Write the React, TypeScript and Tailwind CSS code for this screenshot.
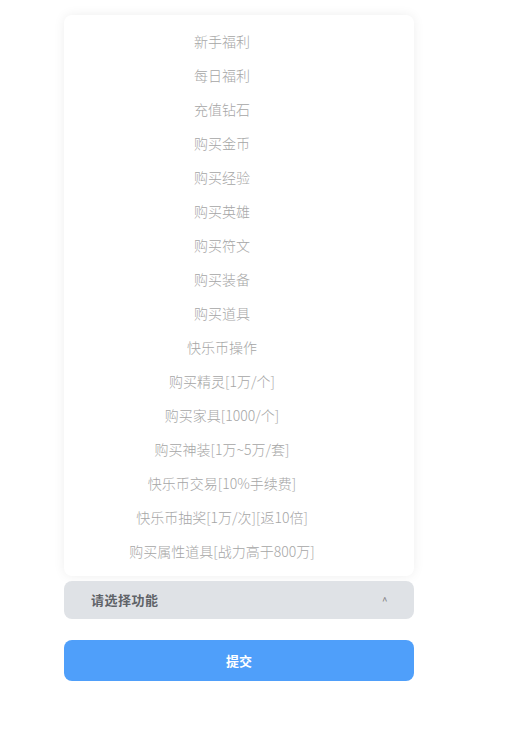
import { useState } from "react";

const options = [
  "新手福利",
  "每日福利",
  "充值钻石",
  "购买金币",
  "购买经验",
  "购买英雄",
  "购买符文",
  "购买装备",
  "购买道具",
  "快乐币操作",
  "购买精灵[1万/个]",
  "购买家具[1000/个]",
  "购买神装[1万~5万/套]",
  "快乐币交易[10%手续费]",
  "快乐币抽奖[1万/次][返10倍]",
  "购买属性道具[战力高于800万]",
];

export default function App() {
  const [open, setOpen] = useState(true);
  const [value, setValue] = useState<string | null>(null);

  return (
    <div
      className="min-h-[733px] w-full bg-white"
      style={{ fontFamily: '"Microsoft YaHei", "Noto Sans CJK SC", "Liberation Sans", sans-serif' }}
    >
      <div className="ml-[64px] w-[350px] pt-[15px]">
        {/* Dropdown panel */}
        {open && (
          <ul className="mb-[5px] rounded-lg bg-white pt-[9px] pb-[8px] shadow-[0_0_12px_rgba(0,0,0,0.07)]">
            {options.map((opt) => (
              <li
                key={opt}
                onClick={() => {
                  setValue(opt);
                  setOpen(false);
                }}
                className="flex h-[34px] cursor-pointer items-center justify-center pr-[34px] text-[14px] font-light text-[#a6a6a6]"
              >
                {opt}
              </li>
            ))}
          </ul>
        )}

        {/* Select */}
        <button
          onClick={() => setOpen(!open)}
          className="flex h-[38px] w-full items-center justify-between rounded-lg bg-[#dfe2e6] pl-[27px] pr-[26px] text-[13px] font-semibold tracking-[0.5px] text-[#5f6368]"
        >
          <span>{value ?? "请选择功能"}</span>
          <span className="text-[10px] font-normal text-[#777]">^</span>
        </button>

        {/* Submit */}
        <button className="mt-[21px] flex h-[41px] w-full items-center justify-center rounded-lg bg-[#4f9ffa] text-[13px] font-bold text-white">
          提交
        </button>
      </div>
    </div>
  );
}
